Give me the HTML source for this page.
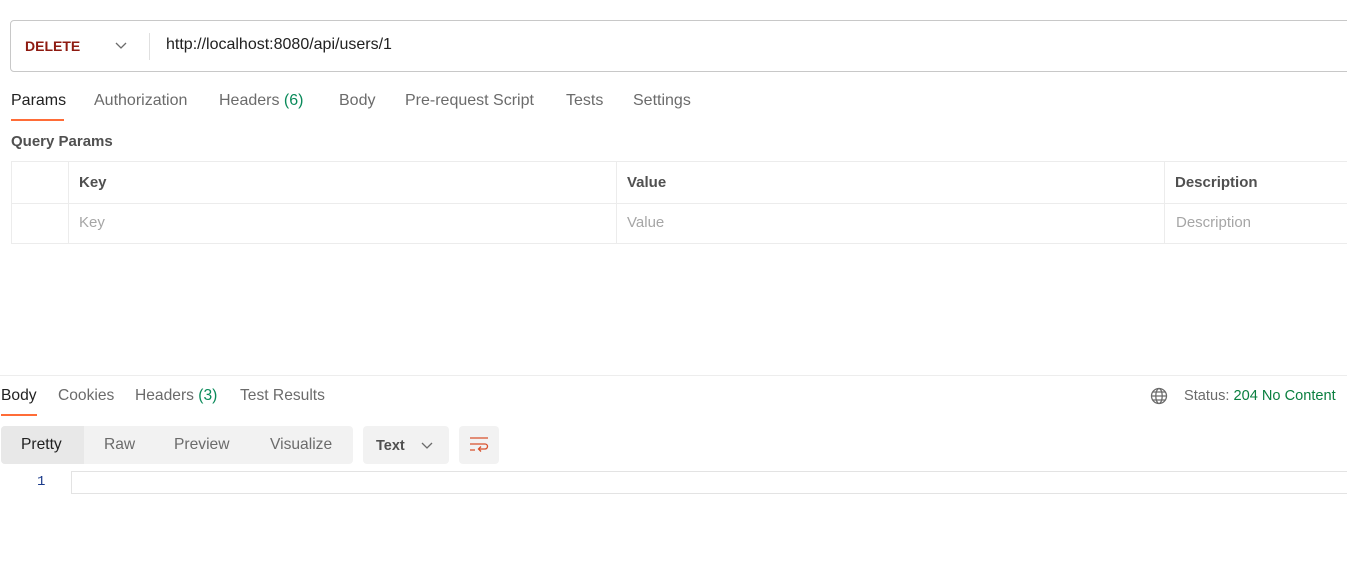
<!DOCTYPE html>
<html><head><style>
*{box-sizing:border-box;margin:0;padding:0}
body{width:1347px;height:578px;background:#fff;font-family:"Liberation Sans",sans-serif;font-size:14px;color:#212121;position:relative;overflow:hidden}
.a{position:absolute;white-space:nowrap}
.g{color:#6b6b6b}
.t{font-size:16px}
.b{font-size:15.6px}
</style></head><body>
<div class="a" style="left:10px;top:20px;width:1345px;height:52px;border:1px solid #c8c8c8;border-radius:4px"></div>
<div class="a" style="left:25px;top:38px;font-weight:bold;color:#8e1a10;font-size:14px">DELETE</div>
<svg class="a" style="left:115px;top:42px" width="12" height="8"><path d="M1 1l5 5 5-5" stroke="#6b6b6b" fill="none" stroke-width="1.3"/></svg>
<div class="a" style="left:149px;top:33px;width:1px;height:27px;background:#e0e0e0"></div>
<div class="a" style="left:166px;top:36px;font-size:16px">http://localhost:8080/api/users/1</div>

<div class="a t" style="left:11px;top:92px">Params</div>
<div class="a" style="left:11px;top:119px;width:53px;height:2px;background:#ff6c37"></div>
<div class="a g t" style="left:94px;top:92px">Authorization</div>
<div class="a g t" style="left:219px;top:92px">Headers <span style="color:#0a8a5a">(6)</span></div>
<div class="a g t" style="left:339px;top:92px">Body</div>
<div class="a g t" style="left:405px;top:92px">Pre-request Script</div>
<div class="a g t" style="left:566px;top:92px">Tests</div>
<div class="a g t" style="left:633px;top:92px">Settings</div>

<div class="a" style="left:11px;top:133px;font-weight:bold;color:#505050;font-size:15px">Query Params</div>
<div class="a" style="left:11px;top:161px;width:1340px;height:83px;border:1px solid #ececec"></div>
<div class="a" style="left:11px;top:203px;width:1340px;height:1px;background:#ececec"></div>
<div class="a" style="left:68px;top:161px;width:1px;height:83px;background:#ececec"></div>
<div class="a" style="left:616px;top:161px;width:1px;height:83px;background:#ececec"></div>
<div class="a" style="left:1164px;top:161px;width:1px;height:83px;background:#ececec"></div>
<div class="a" style="left:79px;top:174px;font-weight:bold;color:#505050;font-size:15px">Key</div>
<div class="a" style="left:627px;top:174px;font-weight:bold;color:#505050;font-size:15px">Value</div>
<div class="a" style="left:1175px;top:174px;font-weight:bold;color:#505050;font-size:15px">Description</div>
<div class="a" style="left:79px;top:214px;color:#a6a6a6;font-size:15px">Key</div>
<div class="a" style="left:627px;top:214px;color:#a6a6a6;font-size:15px">Value</div>
<div class="a" style="left:1176px;top:214px;color:#a6a6a6;font-size:15px">Description</div>

<div class="a" style="left:0;top:375px;width:1347px;height:1px;background:#ededed"></div>
<div class="a b" style="left:1px;top:387px">Body</div>
<div class="a" style="left:1px;top:414px;width:36px;height:2px;background:#ff6c37"></div>
<div class="a g b" style="left:58px;top:387px">Cookies</div>
<div class="a g b" style="left:135px;top:387px">Headers <span style="color:#0a8a5a">(3)</span></div>
<div class="a g b" style="left:240px;top:387px">Test Results</div>
<svg class="a" style="left:1150px;top:387px" width="18" height="18" viewBox="0 0 18 18" fill="none" stroke="#6b6b6b" stroke-width="1.3"><circle cx="9" cy="9" r="7.5"/><ellipse cx="9" cy="9" rx="3.2" ry="7.5"/><path d="M1.5 9h15M3 5h12M3 13h12"/></svg>
<div class="a g" style="left:1184px;top:388px;font-size:14.6px">Status: <span style="color:#0a7f3f">204 No Content</span></div>

<div class="a" style="left:1px;top:426px;width:352px;height:38px;background:#f2f2f2;border-radius:4px"></div>
<div class="a" style="left:1px;top:426px;width:83px;height:38px;background:#e8e8e8;border-radius:4px 0 0 4px"></div>
<div class="a b" style="left:21px;top:436px">Pretty</div>
<div class="a g b" style="left:104px;top:436px">Raw</div>
<div class="a g b" style="left:174px;top:436px">Preview</div>
<div class="a g b" style="left:270px;top:436px">Visualize</div>
<div class="a" style="left:363px;top:426px;width:86px;height:38px;background:#f2f2f2;border-radius:4px"></div>
<div class="a" style="left:376px;top:438px;font-weight:bold;color:#505050;font-size:14.5px">Text</div>
<svg class="a" style="left:421px;top:442px" width="12" height="8"><path d="M1 1l5 5 5-5" stroke="#6b6b6b" fill="none" stroke-width="1.3"/></svg>
<div class="a" style="left:459px;top:426px;width:40px;height:38px;background:#f2f2f2;border-radius:4px"></div>
<svg class="a" style="left:469px;top:436px" width="20" height="18" viewBox="0 0 20 18" fill="none" stroke="#d9512c" stroke-width="1.3"><path d="M1 2h18M1 8h15a2.5 2.5 0 0 1 0 5H10M12 10.5l-2.5 2.5 2.5 2.5M1 14h5"/></svg>

<div class="a" style="left:37px;top:474px;color:#1a3a8a;font-family:'Liberation Mono',monospace;font-size:14px">1</div>
<div class="a" style="left:71px;top:471px;width:1280px;height:23px;border:1px solid #e3e3e3"></div>
</body></html>
